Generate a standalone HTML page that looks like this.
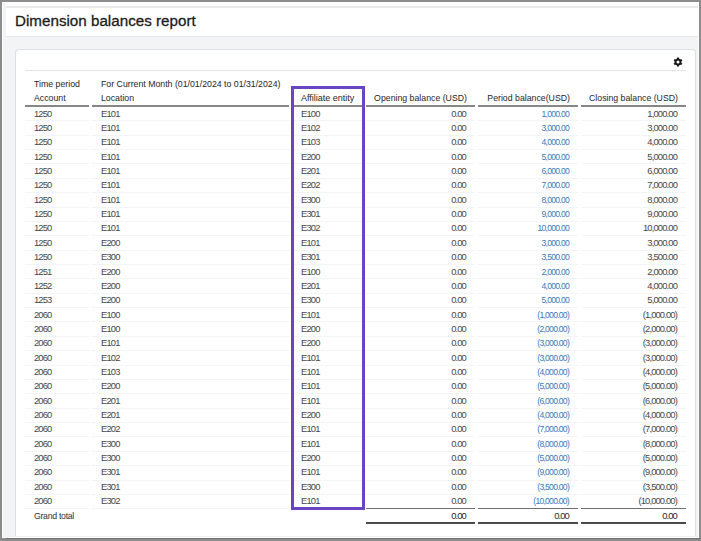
<!DOCTYPE html>
<html><head><meta charset="utf-8"><style>
html,body{margin:0;padding:0}
body{width:701px;height:541px;position:relative;overflow:hidden;background:#8d8d8d;font-family:"Liberation Sans",sans-serif}
.abs{position:absolute}
.ln{position:absolute}
.t{position:absolute;box-sizing:border-box;white-space:nowrap;font-size:8.75px;line-height:14px;color:#474747}
.n{letter-spacing:-0.85px;font-size:9.4px}
.n.b{color:#3879ba;font-size:8.6px;letter-spacing:-0.75px}
.n.tot{color:#262626}
.gt{letter-spacing:-0.3px;color:#333}
.gear{position:absolute}
.h{color:#262626}
.af{font-size:9px}
</style></head><body>
<div class="abs" style="left:2px;top:2px;width:697px;height:536px;background:#fff"></div>
<div class="abs" style="left:3px;top:3px;width:695px;height:534px;background:#f3f4f5"></div>
<div class="abs" style="left:6px;top:2px;width:692px;height:34px;background:#fff;border-bottom:1px solid #e6e8ea"></div>
<div class="abs" style="left:6px;top:6px;width:692px;height:2px;background:#e8eaec"></div>
<div class="abs" style="left:15px;top:49px;width:679px;height:487px;background:#fff;border:1px solid #dcdfe3;border-bottom:0;border-radius:4px 4px 0 0"></div>
<div class="abs" style="left:6px;top:536px;width:692px;height:1px;background:#eceef0"></div>
<div class="abs" style="left:2px;top:537px;width:697px;height:1px;background:#fff"></div>
<div class="abs" style="left:6px;top:538px;width:695px;height:1px;background:#727272"></div>
<div class="abs" style="left:15px;top:8.3px;font-size:15.2px;line-height:26px;color:#1c1c1c;-webkit-text-stroke:0.3px #1c1c1c;white-space:nowrap">Dimension balances report</div>
<svg class="gear" width="12" height="12" viewBox="-6 -6 12 12" style="left:672px;top:56.3px">
<g stroke="#1a1a1a" stroke-linecap="butt">
<circle cx="0" cy="0" r="2.5" fill="none" stroke-width="2.0"/>
<g stroke-width="2.0">
<line x1="0" y1="-2.5" x2="0" y2="-4.5"/>
<line x1="0" y1="2.5" x2="0" y2="4.5"/>
<line x1="2.17" y1="-1.25" x2="3.9" y2="-2.25"/>
<line x1="-2.17" y1="-1.25" x2="-3.9" y2="-2.25"/>
<line x1="2.17" y1="1.25" x2="3.9" y2="2.25"/>
<line x1="-2.17" y1="1.25" x2="-3.9" y2="2.25"/>
</g></g></svg>
<div class="ln" style="left:25px;top:70px;width:661px;height:1px;background:#dfe3e8"></div>
<div class="t h" style="left:34px;top:76.77px">Time period</div>
<div class="t h" style="left:101px;top:76.77px">For Current Month (01/01/2024 to 01/31/2024)</div>
<div class="t h" style="left:34px;top:91.27px">Account</div>
<div class="t h" style="left:101px;top:91.27px">Location</div>
<div class="t h af" style="left:301px;top:91.27px">Affiliate entity</div>
<div class="t r h" style="right:234px;top:91.27px">Opening balance (USD)</div>
<div class="t r h" style="right:131px;top:91.27px">Period balance(USD)</div>
<div class="t r h" style="right:23px;top:91.27px">Closing balance (USD)</div>
<div class="ln" style="left:25px;top:105px;width:64px;height:2px;background:#878787"></div>
<div class="ln" style="left:92px;top:105px;width:197px;height:2px;background:#878787"></div>
<div class="ln" style="left:292px;top:105px;width:71px;height:2px;background:#878787"></div>
<div class="ln" style="left:366px;top:105px;width:109px;height:2px;background:#878787"></div>
<div class="ln" style="left:478px;top:105px;width:100px;height:2px;background:#878787"></div>
<div class="ln" style="left:581px;top:105px;width:105px;height:2px;background:#878787"></div>
<div class="t n" style="left:34px;top:106.77px">1250</div>
<div class="t n" style="left:101px;top:106.77px">E101</div>
<div class="t n" style="left:301px;top:106.77px">E100</div>
<div class="t r n" style="right:235px;top:106.77px">0.00</div>
<div class="t r n b" style="right:132px;top:106.77px">1,000.00</div>
<div class="t r n" style="right:24px;top:106.77px">1,000.00</div>
<div class="ln" style="left:25px;top:120px;width:64px;height:1px;background:#f3f4f6"></div>
<div class="ln" style="left:92px;top:120px;width:197px;height:1px;background:#f3f4f6"></div>
<div class="ln" style="left:292px;top:120px;width:71px;height:1px;background:#f3f4f6"></div>
<div class="ln" style="left:366px;top:120px;width:109px;height:1px;background:#f3f4f6"></div>
<div class="ln" style="left:478px;top:120px;width:100px;height:1px;background:#f3f4f6"></div>
<div class="ln" style="left:581px;top:120px;width:105px;height:1px;background:#f3f4f6"></div>
<div class="t n" style="left:34px;top:121.11px">1250</div>
<div class="t n" style="left:101px;top:121.11px">E101</div>
<div class="t n" style="left:301px;top:121.11px">E102</div>
<div class="t r n" style="right:235px;top:121.11px">0.00</div>
<div class="t r n b" style="right:132px;top:121.11px">3,000.00</div>
<div class="t r n" style="right:24px;top:121.11px">3,000.00</div>
<div class="ln" style="left:25px;top:135px;width:64px;height:1px;background:#f3f4f6"></div>
<div class="ln" style="left:92px;top:135px;width:197px;height:1px;background:#f3f4f6"></div>
<div class="ln" style="left:292px;top:135px;width:71px;height:1px;background:#f3f4f6"></div>
<div class="ln" style="left:366px;top:135px;width:109px;height:1px;background:#f3f4f6"></div>
<div class="ln" style="left:478px;top:135px;width:100px;height:1px;background:#f3f4f6"></div>
<div class="ln" style="left:581px;top:135px;width:105px;height:1px;background:#f3f4f6"></div>
<div class="t n" style="left:34px;top:135.45px">1250</div>
<div class="t n" style="left:101px;top:135.45px">E101</div>
<div class="t n" style="left:301px;top:135.45px">E103</div>
<div class="t r n" style="right:235px;top:135.45px">0.00</div>
<div class="t r n b" style="right:132px;top:135.45px">4,000.00</div>
<div class="t r n" style="right:24px;top:135.45px">4,000.00</div>
<div class="ln" style="left:25px;top:149px;width:64px;height:1px;background:#f3f4f6"></div>
<div class="ln" style="left:92px;top:149px;width:197px;height:1px;background:#f3f4f6"></div>
<div class="ln" style="left:292px;top:149px;width:71px;height:1px;background:#f3f4f6"></div>
<div class="ln" style="left:366px;top:149px;width:109px;height:1px;background:#f3f4f6"></div>
<div class="ln" style="left:478px;top:149px;width:100px;height:1px;background:#f3f4f6"></div>
<div class="ln" style="left:581px;top:149px;width:105px;height:1px;background:#f3f4f6"></div>
<div class="t n" style="left:34px;top:149.79px">1250</div>
<div class="t n" style="left:101px;top:149.79px">E101</div>
<div class="t n" style="left:301px;top:149.79px">E200</div>
<div class="t r n" style="right:235px;top:149.79px">0.00</div>
<div class="t r n b" style="right:132px;top:149.79px">5,000.00</div>
<div class="t r n" style="right:24px;top:149.79px">5,000.00</div>
<div class="ln" style="left:25px;top:163px;width:64px;height:1px;background:#f3f4f6"></div>
<div class="ln" style="left:92px;top:163px;width:197px;height:1px;background:#f3f4f6"></div>
<div class="ln" style="left:292px;top:163px;width:71px;height:1px;background:#f3f4f6"></div>
<div class="ln" style="left:366px;top:163px;width:109px;height:1px;background:#f3f4f6"></div>
<div class="ln" style="left:478px;top:163px;width:100px;height:1px;background:#f3f4f6"></div>
<div class="ln" style="left:581px;top:163px;width:105px;height:1px;background:#f3f4f6"></div>
<div class="t n" style="left:34px;top:164.13px">1250</div>
<div class="t n" style="left:101px;top:164.13px">E101</div>
<div class="t n" style="left:301px;top:164.13px">E201</div>
<div class="t r n" style="right:235px;top:164.13px">0.00</div>
<div class="t r n b" style="right:132px;top:164.13px">6,000.00</div>
<div class="t r n" style="right:24px;top:164.13px">6,000.00</div>
<div class="ln" style="left:25px;top:178px;width:64px;height:1px;background:#f3f4f6"></div>
<div class="ln" style="left:92px;top:178px;width:197px;height:1px;background:#f3f4f6"></div>
<div class="ln" style="left:292px;top:178px;width:71px;height:1px;background:#f3f4f6"></div>
<div class="ln" style="left:366px;top:178px;width:109px;height:1px;background:#f3f4f6"></div>
<div class="ln" style="left:478px;top:178px;width:100px;height:1px;background:#f3f4f6"></div>
<div class="ln" style="left:581px;top:178px;width:105px;height:1px;background:#f3f4f6"></div>
<div class="t n" style="left:34px;top:178.47px">1250</div>
<div class="t n" style="left:101px;top:178.47px">E101</div>
<div class="t n" style="left:301px;top:178.47px">E202</div>
<div class="t r n" style="right:235px;top:178.47px">0.00</div>
<div class="t r n b" style="right:132px;top:178.47px">7,000.00</div>
<div class="t r n" style="right:24px;top:178.47px">7,000.00</div>
<div class="ln" style="left:25px;top:192px;width:64px;height:1px;background:#f3f4f6"></div>
<div class="ln" style="left:92px;top:192px;width:197px;height:1px;background:#f3f4f6"></div>
<div class="ln" style="left:292px;top:192px;width:71px;height:1px;background:#f3f4f6"></div>
<div class="ln" style="left:366px;top:192px;width:109px;height:1px;background:#f3f4f6"></div>
<div class="ln" style="left:478px;top:192px;width:100px;height:1px;background:#f3f4f6"></div>
<div class="ln" style="left:581px;top:192px;width:105px;height:1px;background:#f3f4f6"></div>
<div class="t n" style="left:34px;top:192.81px">1250</div>
<div class="t n" style="left:101px;top:192.81px">E101</div>
<div class="t n" style="left:301px;top:192.81px">E300</div>
<div class="t r n" style="right:235px;top:192.81px">0.00</div>
<div class="t r n b" style="right:132px;top:192.81px">8,000.00</div>
<div class="t r n" style="right:24px;top:192.81px">8,000.00</div>
<div class="ln" style="left:25px;top:207px;width:64px;height:1px;background:#f3f4f6"></div>
<div class="ln" style="left:92px;top:207px;width:197px;height:1px;background:#f3f4f6"></div>
<div class="ln" style="left:292px;top:207px;width:71px;height:1px;background:#f3f4f6"></div>
<div class="ln" style="left:366px;top:207px;width:109px;height:1px;background:#f3f4f6"></div>
<div class="ln" style="left:478px;top:207px;width:100px;height:1px;background:#f3f4f6"></div>
<div class="ln" style="left:581px;top:207px;width:105px;height:1px;background:#f3f4f6"></div>
<div class="t n" style="left:34px;top:207.15px">1250</div>
<div class="t n" style="left:101px;top:207.15px">E101</div>
<div class="t n" style="left:301px;top:207.15px">E301</div>
<div class="t r n" style="right:235px;top:207.15px">0.00</div>
<div class="t r n b" style="right:132px;top:207.15px">9,000.00</div>
<div class="t r n" style="right:24px;top:207.15px">9,000.00</div>
<div class="ln" style="left:25px;top:221px;width:64px;height:1px;background:#f3f4f6"></div>
<div class="ln" style="left:92px;top:221px;width:197px;height:1px;background:#f3f4f6"></div>
<div class="ln" style="left:292px;top:221px;width:71px;height:1px;background:#f3f4f6"></div>
<div class="ln" style="left:366px;top:221px;width:109px;height:1px;background:#f3f4f6"></div>
<div class="ln" style="left:478px;top:221px;width:100px;height:1px;background:#f3f4f6"></div>
<div class="ln" style="left:581px;top:221px;width:105px;height:1px;background:#f3f4f6"></div>
<div class="t n" style="left:34px;top:221.49px">1250</div>
<div class="t n" style="left:101px;top:221.49px">E101</div>
<div class="t n" style="left:301px;top:221.49px">E302</div>
<div class="t r n" style="right:235px;top:221.49px">0.00</div>
<div class="t r n b" style="right:132px;top:221.49px">10,000.00</div>
<div class="t r n" style="right:24px;top:221.49px">10,000.00</div>
<div class="ln" style="left:25px;top:235px;width:64px;height:1px;background:#f3f4f6"></div>
<div class="ln" style="left:92px;top:235px;width:197px;height:1px;background:#f3f4f6"></div>
<div class="ln" style="left:292px;top:235px;width:71px;height:1px;background:#f3f4f6"></div>
<div class="ln" style="left:366px;top:235px;width:109px;height:1px;background:#f3f4f6"></div>
<div class="ln" style="left:478px;top:235px;width:100px;height:1px;background:#f3f4f6"></div>
<div class="ln" style="left:581px;top:235px;width:105px;height:1px;background:#f3f4f6"></div>
<div class="t n" style="left:34px;top:235.83px">1250</div>
<div class="t n" style="left:101px;top:235.83px">E200</div>
<div class="t n" style="left:301px;top:235.83px">E101</div>
<div class="t r n" style="right:235px;top:235.83px">0.00</div>
<div class="t r n b" style="right:132px;top:235.83px">3,000.00</div>
<div class="t r n" style="right:24px;top:235.83px">3,000.00</div>
<div class="ln" style="left:25px;top:250px;width:64px;height:1px;background:#f3f4f6"></div>
<div class="ln" style="left:92px;top:250px;width:197px;height:1px;background:#f3f4f6"></div>
<div class="ln" style="left:292px;top:250px;width:71px;height:1px;background:#f3f4f6"></div>
<div class="ln" style="left:366px;top:250px;width:109px;height:1px;background:#f3f4f6"></div>
<div class="ln" style="left:478px;top:250px;width:100px;height:1px;background:#f3f4f6"></div>
<div class="ln" style="left:581px;top:250px;width:105px;height:1px;background:#f3f4f6"></div>
<div class="t n" style="left:34px;top:250.17px">1250</div>
<div class="t n" style="left:101px;top:250.17px">E300</div>
<div class="t n" style="left:301px;top:250.17px">E301</div>
<div class="t r n" style="right:235px;top:250.17px">0.00</div>
<div class="t r n b" style="right:132px;top:250.17px">3,500.00</div>
<div class="t r n" style="right:24px;top:250.17px">3,500.00</div>
<div class="ln" style="left:25px;top:264px;width:64px;height:1px;background:#f3f4f6"></div>
<div class="ln" style="left:92px;top:264px;width:197px;height:1px;background:#f3f4f6"></div>
<div class="ln" style="left:292px;top:264px;width:71px;height:1px;background:#f3f4f6"></div>
<div class="ln" style="left:366px;top:264px;width:109px;height:1px;background:#f3f4f6"></div>
<div class="ln" style="left:478px;top:264px;width:100px;height:1px;background:#f3f4f6"></div>
<div class="ln" style="left:581px;top:264px;width:105px;height:1px;background:#f3f4f6"></div>
<div class="t n" style="left:34px;top:264.51px">1251</div>
<div class="t n" style="left:101px;top:264.51px">E200</div>
<div class="t n" style="left:301px;top:264.51px">E100</div>
<div class="t r n" style="right:235px;top:264.51px">0.00</div>
<div class="t r n b" style="right:132px;top:264.51px">2,000.00</div>
<div class="t r n" style="right:24px;top:264.51px">2,000.00</div>
<div class="ln" style="left:25px;top:278px;width:64px;height:1px;background:#f3f4f6"></div>
<div class="ln" style="left:92px;top:278px;width:197px;height:1px;background:#f3f4f6"></div>
<div class="ln" style="left:292px;top:278px;width:71px;height:1px;background:#f3f4f6"></div>
<div class="ln" style="left:366px;top:278px;width:109px;height:1px;background:#f3f4f6"></div>
<div class="ln" style="left:478px;top:278px;width:100px;height:1px;background:#f3f4f6"></div>
<div class="ln" style="left:581px;top:278px;width:105px;height:1px;background:#f3f4f6"></div>
<div class="t n" style="left:34px;top:278.85px">1252</div>
<div class="t n" style="left:101px;top:278.85px">E200</div>
<div class="t n" style="left:301px;top:278.85px">E201</div>
<div class="t r n" style="right:235px;top:278.85px">0.00</div>
<div class="t r n b" style="right:132px;top:278.85px">4,000.00</div>
<div class="t r n" style="right:24px;top:278.85px">4,000.00</div>
<div class="ln" style="left:25px;top:293px;width:64px;height:1px;background:#f3f4f6"></div>
<div class="ln" style="left:92px;top:293px;width:197px;height:1px;background:#f3f4f6"></div>
<div class="ln" style="left:292px;top:293px;width:71px;height:1px;background:#f3f4f6"></div>
<div class="ln" style="left:366px;top:293px;width:109px;height:1px;background:#f3f4f6"></div>
<div class="ln" style="left:478px;top:293px;width:100px;height:1px;background:#f3f4f6"></div>
<div class="ln" style="left:581px;top:293px;width:105px;height:1px;background:#f3f4f6"></div>
<div class="t n" style="left:34px;top:293.19px">1253</div>
<div class="t n" style="left:101px;top:293.19px">E200</div>
<div class="t n" style="left:301px;top:293.19px">E300</div>
<div class="t r n" style="right:235px;top:293.19px">0.00</div>
<div class="t r n b" style="right:132px;top:293.19px">5,000.00</div>
<div class="t r n" style="right:24px;top:293.19px">5,000.00</div>
<div class="ln" style="left:25px;top:307px;width:64px;height:1px;background:#f3f4f6"></div>
<div class="ln" style="left:92px;top:307px;width:197px;height:1px;background:#f3f4f6"></div>
<div class="ln" style="left:292px;top:307px;width:71px;height:1px;background:#f3f4f6"></div>
<div class="ln" style="left:366px;top:307px;width:109px;height:1px;background:#f3f4f6"></div>
<div class="ln" style="left:478px;top:307px;width:100px;height:1px;background:#f3f4f6"></div>
<div class="ln" style="left:581px;top:307px;width:105px;height:1px;background:#f3f4f6"></div>
<div class="t n" style="left:34px;top:307.53px">2060</div>
<div class="t n" style="left:101px;top:307.53px">E100</div>
<div class="t n" style="left:301px;top:307.53px">E101</div>
<div class="t r n" style="right:235px;top:307.53px">0.00</div>
<div class="t r n b" style="right:132px;top:307.53px">(1,000.00)</div>
<div class="t r n" style="right:24px;top:307.53px">(1,000.00)</div>
<div class="ln" style="left:25px;top:321px;width:64px;height:1px;background:#f3f4f6"></div>
<div class="ln" style="left:92px;top:321px;width:197px;height:1px;background:#f3f4f6"></div>
<div class="ln" style="left:292px;top:321px;width:71px;height:1px;background:#f3f4f6"></div>
<div class="ln" style="left:366px;top:321px;width:109px;height:1px;background:#f3f4f6"></div>
<div class="ln" style="left:478px;top:321px;width:100px;height:1px;background:#f3f4f6"></div>
<div class="ln" style="left:581px;top:321px;width:105px;height:1px;background:#f3f4f6"></div>
<div class="t n" style="left:34px;top:321.87px">2060</div>
<div class="t n" style="left:101px;top:321.87px">E100</div>
<div class="t n" style="left:301px;top:321.87px">E200</div>
<div class="t r n" style="right:235px;top:321.87px">0.00</div>
<div class="t r n b" style="right:132px;top:321.87px">(2,000.00)</div>
<div class="t r n" style="right:24px;top:321.87px">(2,000.00)</div>
<div class="ln" style="left:25px;top:336px;width:64px;height:1px;background:#f3f4f6"></div>
<div class="ln" style="left:92px;top:336px;width:197px;height:1px;background:#f3f4f6"></div>
<div class="ln" style="left:292px;top:336px;width:71px;height:1px;background:#f3f4f6"></div>
<div class="ln" style="left:366px;top:336px;width:109px;height:1px;background:#f3f4f6"></div>
<div class="ln" style="left:478px;top:336px;width:100px;height:1px;background:#f3f4f6"></div>
<div class="ln" style="left:581px;top:336px;width:105px;height:1px;background:#f3f4f6"></div>
<div class="t n" style="left:34px;top:336.21px">2060</div>
<div class="t n" style="left:101px;top:336.21px">E101</div>
<div class="t n" style="left:301px;top:336.21px">E200</div>
<div class="t r n" style="right:235px;top:336.21px">0.00</div>
<div class="t r n b" style="right:132px;top:336.21px">(3,000.00)</div>
<div class="t r n" style="right:24px;top:336.21px">(3,000.00)</div>
<div class="ln" style="left:25px;top:350px;width:64px;height:1px;background:#f3f4f6"></div>
<div class="ln" style="left:92px;top:350px;width:197px;height:1px;background:#f3f4f6"></div>
<div class="ln" style="left:292px;top:350px;width:71px;height:1px;background:#f3f4f6"></div>
<div class="ln" style="left:366px;top:350px;width:109px;height:1px;background:#f3f4f6"></div>
<div class="ln" style="left:478px;top:350px;width:100px;height:1px;background:#f3f4f6"></div>
<div class="ln" style="left:581px;top:350px;width:105px;height:1px;background:#f3f4f6"></div>
<div class="t n" style="left:34px;top:350.55px">2060</div>
<div class="t n" style="left:101px;top:350.55px">E102</div>
<div class="t n" style="left:301px;top:350.55px">E101</div>
<div class="t r n" style="right:235px;top:350.55px">0.00</div>
<div class="t r n b" style="right:132px;top:350.55px">(3,000.00)</div>
<div class="t r n" style="right:24px;top:350.55px">(3,000.00)</div>
<div class="ln" style="left:25px;top:365px;width:64px;height:1px;background:#f3f4f6"></div>
<div class="ln" style="left:92px;top:365px;width:197px;height:1px;background:#f3f4f6"></div>
<div class="ln" style="left:292px;top:365px;width:71px;height:1px;background:#f3f4f6"></div>
<div class="ln" style="left:366px;top:365px;width:109px;height:1px;background:#f3f4f6"></div>
<div class="ln" style="left:478px;top:365px;width:100px;height:1px;background:#f3f4f6"></div>
<div class="ln" style="left:581px;top:365px;width:105px;height:1px;background:#f3f4f6"></div>
<div class="t n" style="left:34px;top:364.89px">2060</div>
<div class="t n" style="left:101px;top:364.89px">E103</div>
<div class="t n" style="left:301px;top:364.89px">E101</div>
<div class="t r n" style="right:235px;top:364.89px">0.00</div>
<div class="t r n b" style="right:132px;top:364.89px">(4,000.00)</div>
<div class="t r n" style="right:24px;top:364.89px">(4,000.00)</div>
<div class="ln" style="left:25px;top:379px;width:64px;height:1px;background:#f3f4f6"></div>
<div class="ln" style="left:92px;top:379px;width:197px;height:1px;background:#f3f4f6"></div>
<div class="ln" style="left:292px;top:379px;width:71px;height:1px;background:#f3f4f6"></div>
<div class="ln" style="left:366px;top:379px;width:109px;height:1px;background:#f3f4f6"></div>
<div class="ln" style="left:478px;top:379px;width:100px;height:1px;background:#f3f4f6"></div>
<div class="ln" style="left:581px;top:379px;width:105px;height:1px;background:#f3f4f6"></div>
<div class="t n" style="left:34px;top:379.23px">2060</div>
<div class="t n" style="left:101px;top:379.23px">E200</div>
<div class="t n" style="left:301px;top:379.23px">E101</div>
<div class="t r n" style="right:235px;top:379.23px">0.00</div>
<div class="t r n b" style="right:132px;top:379.23px">(5,000.00)</div>
<div class="t r n" style="right:24px;top:379.23px">(5,000.00)</div>
<div class="ln" style="left:25px;top:393px;width:64px;height:1px;background:#f3f4f6"></div>
<div class="ln" style="left:92px;top:393px;width:197px;height:1px;background:#f3f4f6"></div>
<div class="ln" style="left:292px;top:393px;width:71px;height:1px;background:#f3f4f6"></div>
<div class="ln" style="left:366px;top:393px;width:109px;height:1px;background:#f3f4f6"></div>
<div class="ln" style="left:478px;top:393px;width:100px;height:1px;background:#f3f4f6"></div>
<div class="ln" style="left:581px;top:393px;width:105px;height:1px;background:#f3f4f6"></div>
<div class="t n" style="left:34px;top:393.57px">2060</div>
<div class="t n" style="left:101px;top:393.57px">E201</div>
<div class="t n" style="left:301px;top:393.57px">E101</div>
<div class="t r n" style="right:235px;top:393.57px">0.00</div>
<div class="t r n b" style="right:132px;top:393.57px">(6,000.00)</div>
<div class="t r n" style="right:24px;top:393.57px">(6,000.00)</div>
<div class="ln" style="left:25px;top:408px;width:64px;height:1px;background:#f3f4f6"></div>
<div class="ln" style="left:92px;top:408px;width:197px;height:1px;background:#f3f4f6"></div>
<div class="ln" style="left:292px;top:408px;width:71px;height:1px;background:#f3f4f6"></div>
<div class="ln" style="left:366px;top:408px;width:109px;height:1px;background:#f3f4f6"></div>
<div class="ln" style="left:478px;top:408px;width:100px;height:1px;background:#f3f4f6"></div>
<div class="ln" style="left:581px;top:408px;width:105px;height:1px;background:#f3f4f6"></div>
<div class="t n" style="left:34px;top:407.91px">2060</div>
<div class="t n" style="left:101px;top:407.91px">E201</div>
<div class="t n" style="left:301px;top:407.91px">E200</div>
<div class="t r n" style="right:235px;top:407.91px">0.00</div>
<div class="t r n b" style="right:132px;top:407.91px">(4,000.00)</div>
<div class="t r n" style="right:24px;top:407.91px">(4,000.00)</div>
<div class="ln" style="left:25px;top:422px;width:64px;height:1px;background:#f3f4f6"></div>
<div class="ln" style="left:92px;top:422px;width:197px;height:1px;background:#f3f4f6"></div>
<div class="ln" style="left:292px;top:422px;width:71px;height:1px;background:#f3f4f6"></div>
<div class="ln" style="left:366px;top:422px;width:109px;height:1px;background:#f3f4f6"></div>
<div class="ln" style="left:478px;top:422px;width:100px;height:1px;background:#f3f4f6"></div>
<div class="ln" style="left:581px;top:422px;width:105px;height:1px;background:#f3f4f6"></div>
<div class="t n" style="left:34px;top:422.25px">2060</div>
<div class="t n" style="left:101px;top:422.25px">E202</div>
<div class="t n" style="left:301px;top:422.25px">E101</div>
<div class="t r n" style="right:235px;top:422.25px">0.00</div>
<div class="t r n b" style="right:132px;top:422.25px">(7,000.00)</div>
<div class="t r n" style="right:24px;top:422.25px">(7,000.00)</div>
<div class="ln" style="left:25px;top:436px;width:64px;height:1px;background:#f3f4f6"></div>
<div class="ln" style="left:92px;top:436px;width:197px;height:1px;background:#f3f4f6"></div>
<div class="ln" style="left:292px;top:436px;width:71px;height:1px;background:#f3f4f6"></div>
<div class="ln" style="left:366px;top:436px;width:109px;height:1px;background:#f3f4f6"></div>
<div class="ln" style="left:478px;top:436px;width:100px;height:1px;background:#f3f4f6"></div>
<div class="ln" style="left:581px;top:436px;width:105px;height:1px;background:#f3f4f6"></div>
<div class="t n" style="left:34px;top:436.59px">2060</div>
<div class="t n" style="left:101px;top:436.59px">E300</div>
<div class="t n" style="left:301px;top:436.59px">E101</div>
<div class="t r n" style="right:235px;top:436.59px">0.00</div>
<div class="t r n b" style="right:132px;top:436.59px">(8,000.00)</div>
<div class="t r n" style="right:24px;top:436.59px">(8,000.00)</div>
<div class="ln" style="left:25px;top:451px;width:64px;height:1px;background:#f3f4f6"></div>
<div class="ln" style="left:92px;top:451px;width:197px;height:1px;background:#f3f4f6"></div>
<div class="ln" style="left:292px;top:451px;width:71px;height:1px;background:#f3f4f6"></div>
<div class="ln" style="left:366px;top:451px;width:109px;height:1px;background:#f3f4f6"></div>
<div class="ln" style="left:478px;top:451px;width:100px;height:1px;background:#f3f4f6"></div>
<div class="ln" style="left:581px;top:451px;width:105px;height:1px;background:#f3f4f6"></div>
<div class="t n" style="left:34px;top:450.93px">2060</div>
<div class="t n" style="left:101px;top:450.93px">E300</div>
<div class="t n" style="left:301px;top:450.93px">E200</div>
<div class="t r n" style="right:235px;top:450.93px">0.00</div>
<div class="t r n b" style="right:132px;top:450.93px">(5,000.00)</div>
<div class="t r n" style="right:24px;top:450.93px">(5,000.00)</div>
<div class="ln" style="left:25px;top:465px;width:64px;height:1px;background:#f3f4f6"></div>
<div class="ln" style="left:92px;top:465px;width:197px;height:1px;background:#f3f4f6"></div>
<div class="ln" style="left:292px;top:465px;width:71px;height:1px;background:#f3f4f6"></div>
<div class="ln" style="left:366px;top:465px;width:109px;height:1px;background:#f3f4f6"></div>
<div class="ln" style="left:478px;top:465px;width:100px;height:1px;background:#f3f4f6"></div>
<div class="ln" style="left:581px;top:465px;width:105px;height:1px;background:#f3f4f6"></div>
<div class="t n" style="left:34px;top:465.27px">2060</div>
<div class="t n" style="left:101px;top:465.27px">E301</div>
<div class="t n" style="left:301px;top:465.27px">E101</div>
<div class="t r n" style="right:235px;top:465.27px">0.00</div>
<div class="t r n b" style="right:132px;top:465.27px">(9,000.00)</div>
<div class="t r n" style="right:24px;top:465.27px">(9,000.00)</div>
<div class="ln" style="left:25px;top:480px;width:64px;height:1px;background:#f3f4f6"></div>
<div class="ln" style="left:92px;top:480px;width:197px;height:1px;background:#f3f4f6"></div>
<div class="ln" style="left:292px;top:480px;width:71px;height:1px;background:#f3f4f6"></div>
<div class="ln" style="left:366px;top:480px;width:109px;height:1px;background:#f3f4f6"></div>
<div class="ln" style="left:478px;top:480px;width:100px;height:1px;background:#f3f4f6"></div>
<div class="ln" style="left:581px;top:480px;width:105px;height:1px;background:#f3f4f6"></div>
<div class="t n" style="left:34px;top:479.61px">2060</div>
<div class="t n" style="left:101px;top:479.61px">E301</div>
<div class="t n" style="left:301px;top:479.61px">E300</div>
<div class="t r n" style="right:235px;top:479.61px">0.00</div>
<div class="t r n b" style="right:132px;top:479.61px">(3,500.00)</div>
<div class="t r n" style="right:24px;top:479.61px">(3,500.00)</div>
<div class="ln" style="left:25px;top:494px;width:64px;height:1px;background:#f3f4f6"></div>
<div class="ln" style="left:92px;top:494px;width:197px;height:1px;background:#f3f4f6"></div>
<div class="ln" style="left:292px;top:494px;width:71px;height:1px;background:#f3f4f6"></div>
<div class="ln" style="left:366px;top:494px;width:109px;height:1px;background:#f3f4f6"></div>
<div class="ln" style="left:478px;top:494px;width:100px;height:1px;background:#f3f4f6"></div>
<div class="ln" style="left:581px;top:494px;width:105px;height:1px;background:#f3f4f6"></div>
<div class="t n" style="left:34px;top:493.95px">2060</div>
<div class="t n" style="left:101px;top:493.95px">E302</div>
<div class="t n" style="left:301px;top:493.95px">E101</div>
<div class="t r n" style="right:235px;top:493.95px">0.00</div>
<div class="t r n b" style="right:132px;top:493.95px">(10,000.00)</div>
<div class="t r n" style="right:24px;top:493.95px">(10,000.00)</div>
<div class="ln" style="left:25px;top:508px;width:64px;height:1px;background:#f3f4f6"></div>
<div class="ln" style="left:92px;top:508px;width:197px;height:1px;background:#f3f4f6"></div>
<div class="ln" style="left:292px;top:508px;width:71px;height:1px;background:#f3f4f6"></div>
<div class="ln" style="left:366px;top:508px;width:109px;height:1px;background:#6e6e6e"></div>
<div class="ln" style="left:478px;top:508px;width:100px;height:1px;background:#6e6e6e"></div>
<div class="ln" style="left:581px;top:508px;width:105px;height:1px;background:#6e6e6e"></div>
<div class="t gt" style="left:34px;top:508.67px">Grand total</div>
<div class="t r n tot" style="right:235px;top:508.67px">0.00</div>
<div class="t r n tot" style="right:132px;top:508.67px">0.00</div>
<div class="t r n tot" style="right:24px;top:508.67px">0.00</div>
<div class="ln" style="left:366px;top:522px;width:109px;height:2px;background:#4a4a4a"></div>
<div class="ln" style="left:478px;top:522px;width:100px;height:2px;background:#4a4a4a"></div>
<div class="ln" style="left:581px;top:522px;width:105px;height:2px;background:#4a4a4a"></div>

<div class="abs" style="left:291px;top:86px;width:68px;height:418px;border:3px solid #6944c4"></div>
</body></html>
